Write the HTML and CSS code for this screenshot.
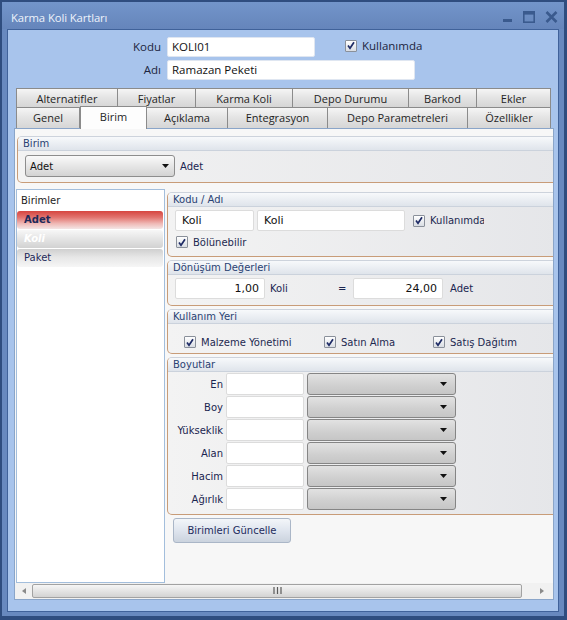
FILE: index.html
```html
<!DOCTYPE html>
<html lang="tr">
<head>
<meta charset="utf-8">
<title>Karma Koli Kartları</title>
<link rel="stylesheet" href="styles.css">
</head>
<body>
<div class="window">
  <div class="frame">
    <div class="titlebar">
      <span class="title">Karma Koli Kartları</span>
      <div class="controls">
        <svg class="ctl ctl-min" width="10" height="12" viewBox="0 0 10 12"><rect x="0" y="8" width="9" height="3" fill="currentColor"/></svg>
        <svg class="ctl ctl-max" width="12" height="12" viewBox="0 0 12 12"><rect x="0.8" y="0.8" width="10.4" height="10.4" fill="none" stroke="currentColor" stroke-width="1.6"/><rect x="0" y="0" width="12" height="3.6" fill="currentColor"/></svg>
        <svg class="ctl ctl-close" width="13" height="12" viewBox="0 0 13 12"><path d="M1.5 1 L11.5 11 M11.5 1 L1.5 11" stroke="currentColor" stroke-width="2.6" fill="none"/></svg>
      </div>
    </div>
    <div class="client">
      <div class="head">
        <span class="hl">Kodu</span>
        <div class="tb tb-kod">KOLI01</div>
        <div class="chk head-chk"><span class="cb"><svg width="11" height="11" viewBox="0 0 11 11"><path d="M2.2 5.6 L4.4 8.6 L8.8 2" fill="none" stroke="#1f2c66" stroke-width="1.9"/></svg></span><span>Kullanımda</span></div>
        <span class="hl">Adı</span>
        <div class="tb tb-adi">Ramazan Peketi</div>
      </div>

      <div class="tabs">
        <div class="tabrow r1">
          <div class="tab w101">Alternatifler</div>
          <div class="tab w79">Fiyatlar</div>
          <div class="tab w97">Karma Koli</div>
          <div class="tab w116">Depo Durumu</div>
          <div class="tab w68">Barkod</div>
          <div class="tab w74">Ekler</div>
        </div>
        <div class="tabrow r2">
          <div class="tab w64">Genel</div>
          <div class="tab w67 sel">Birim</div>
          <div class="tab w81">Açıklama</div>
          <div class="tab w100">Entegrasyon</div>
          <div class="tab w140">Depo Parametreleri</div>
          <div class="tab w83">Özellikler</div>
        </div>
      </div>

      <div class="panel">
        <div class="scroll">
          <div class="group g-birim">
            <div class="gh">Birim</div>
            <div class="gb row-birim">
              <div class="combo combo-birim"><span>Adet</span><svg class="arr" width="7" height="4" viewBox="0 0 7 4"><path d="M0 0 H7 L3.5 4 Z" fill="#111"/></svg></div>
              <span class="txt lbl-adet">Adet</span>
            </div>
          </div>

          <div class="lower">
            <div class="list">
              <div class="li-head">Birimler</div>
              <div class="li li-sel">Adet</div>
              <div class="li li-koli">Koli</div>
              <div class="li li-paket">Paket</div>
            </div>

            <div class="right">
              <div class="group g-kod">
                <div class="gh">Kodu / Adı</div>
                <div class="gb">
                  <div class="line">
                    <div class="in in-k1">Koli</div>
                    <div class="in in-k2">Koli</div>
                    <div class="chk chk-clip"><span class="cb"><svg width="11" height="11" viewBox="0 0 11 11"><path d="M2.2 5.6 L4.4 8.6 L8.8 2" fill="none" stroke="#1f2c66" stroke-width="1.9"/></svg></span><span>Kullanımda</span></div>
                  </div>
                  <div class="line line-chk">
                    <div class="chk"><span class="cb"><svg width="11" height="11" viewBox="0 0 11 11"><path d="M2.2 5.6 L4.4 8.6 L8.8 2" fill="none" stroke="#1f2c66" stroke-width="1.9"/></svg></span><span>Bölünebilir</span></div>
                  </div>
                </div>
              </div>

              <div class="group g-don">
                <div class="gh">Dönüşüm Değerleri</div>
                <div class="gb">
                  <div class="line">
                    <div class="in num">1,00</div>
                    <span class="txt u1">Koli</span>
                    <span class="txt eq">=</span>
                    <div class="in num">24,00</div>
                    <span class="txt u2">Adet</span>
                  </div>
                </div>
              </div>

              <div class="group g-kul">
                <div class="gh">Kullanım Yeri</div>
                <div class="gb">
                  <div class="line">
                    <div class="chk k1"><span class="cb"><svg width="11" height="11" viewBox="0 0 11 11"><path d="M2.2 5.6 L4.4 8.6 L8.8 2" fill="none" stroke="#1f2c66" stroke-width="1.9"/></svg></span><span>Malzeme Yönetimi</span></div>
                    <div class="chk k2"><span class="cb"><svg width="11" height="11" viewBox="0 0 11 11"><path d="M2.2 5.6 L4.4 8.6 L8.8 2" fill="none" stroke="#1f2c66" stroke-width="1.9"/></svg></span><span>Satın Alma</span></div>
                    <div class="chk k3"><span class="cb"><svg width="11" height="11" viewBox="0 0 11 11"><path d="M2.2 5.6 L4.4 8.6 L8.8 2" fill="none" stroke="#1f2c66" stroke-width="1.9"/></svg></span><span>Satış Dağıtım</span></div>
                  </div>
                </div>
              </div>

              <div class="group g-boy">
                <div class="gh">Boyutlar</div>
                <div class="gb">
                  <div class="drow"><span class="dl">En</span><div class="in din"></div><div class="combo dcombo"><svg class="arr" width="7" height="4" viewBox="0 0 7 4"><path d="M0 0 H7 L3.5 4 Z" fill="#111"/></svg></div></div>
                  <div class="drow"><span class="dl">Boy</span><div class="in din"></div><div class="combo dcombo"><svg class="arr" width="7" height="4" viewBox="0 0 7 4"><path d="M0 0 H7 L3.5 4 Z" fill="#111"/></svg></div></div>
                  <div class="drow"><span class="dl">Yükseklik</span><div class="in din"></div><div class="combo dcombo"><svg class="arr" width="7" height="4" viewBox="0 0 7 4"><path d="M0 0 H7 L3.5 4 Z" fill="#111"/></svg></div></div>
                  <div class="drow"><span class="dl">Alan</span><div class="in din"></div><div class="combo dcombo"><svg class="arr" width="7" height="4" viewBox="0 0 7 4"><path d="M0 0 H7 L3.5 4 Z" fill="#111"/></svg></div></div>
                  <div class="drow"><span class="dl">Hacim</span><div class="in din"></div><div class="combo dcombo"><svg class="arr" width="7" height="4" viewBox="0 0 7 4"><path d="M0 0 H7 L3.5 4 Z" fill="#111"/></svg></div></div>
                  <div class="drow"><span class="dl">Ağırlık</span><div class="in din"></div><div class="combo dcombo"><svg class="arr" width="7" height="4" viewBox="0 0 7 4"><path d="M0 0 H7 L3.5 4 Z" fill="#111"/></svg></div></div>
                </div>
              </div>

              <div class="btn">Birimleri Güncelle</div>
            </div>
          </div>
        </div>

        <div class="hscroll">
          <div class="sa sa-left"><svg width="4" height="6" viewBox="0 0 4 6"><path d="M4 0 V6 L0 3 Z" fill="#8a8a8a"/></svg></div>
          <div class="thumb"><svg width="9" height="7" viewBox="0 0 9 7"><path d="M1 0 V7 M4.5 0 V7 M8 0 V7" stroke="#5a5a5a" stroke-width="1.2"/></svg></div>
          <div class="sa sa-right"><svg width="4" height="6" viewBox="0 0 4 6"><path d="M0 0 V6 L4 3 Z" fill="#8a8a8a"/></svg></div>
        </div>
      </div>
    </div>
  </div>
</div>
</body>
</html>
```

FILE: styles.css
```css
* { box-sizing: border-box; }
html, body { margin: 0; padding: 0; }
body { background: #2e4c7e; width: 567px; height: 620px; overflow: hidden; }

.window {
  width: 567px; height: 620px;
  background: #2f4d7f;
  padding: 2px 3px 4px 2px;
}
.frame {
  height: 614px;
  background: #6889bf;
  padding: 0 5px 4px 5px;
  display: flex; flex-direction: column;
}
.titlebar {
  height: 27px; flex-shrink: 0;
  display: flex; align-items: center; justify-content: space-between;
  padding: 3px 1px 0 4px;
  background: linear-gradient(#7395ca, #6585bb);
  margin: 0 -5px; padding-left: 9px; padding-right: 6px;
}
.title {
  font-family: "Open Sans", "Liberation Sans", sans-serif;
  font-size: 11.3px; color: #eef3fb; letter-spacing: -0.1px;
}
.controls { display: flex; align-items: center; gap: 10px; color: #3a5a8e; }
.ctl { display: block; }

.client {
  flex: 1;
  border: 1px solid #40629a;
  background: #a8c4ec;
  display: flex; flex-direction: column;
}

/* header form */
.head {
  display: grid;
  grid-template-columns: 153px 148px 100px;
  grid-template-rows: 20px 20px;
  column-gap: 6px; row-gap: 3px;
  padding-top: 7px;
  font-family: "Open Sans", "Liberation Sans", sans-serif;
  font-size: 11.5px; color: #1c2440;
}
.hl { text-align: right; line-height: 19px; }
.tb {
  background: #fff; border-radius: 2px; border: 1px solid #dfe6f1;
  line-height: 18px; padding-left: 4px; color: #111;
}
.tb-adi { grid-column: 2 / span 2; width: 248px; }
.head-chk { margin-left: 24px; align-self: start; margin-top: 1px; }

.chk {
  display: flex; align-items: center; gap: 5px; white-space: nowrap;
}
.cb {
  width: 12px; height: 12px; flex-shrink: 0;
  border: 1px solid #8a909a; border-radius: 1px;
  background: linear-gradient(#ffffff, #d9dde3);
  display: flex; align-items: center; justify-content: center;
}
.cb svg { display: block; }

/* tabs */
.tabs { margin: 8px 6px 0 8px; font-family: "Open Sans", "Liberation Sans", sans-serif; font-size: 11px; color: #1f1f1f; }
.tabrow { display: flex; align-items: flex-start; }
.tab {
  height: 20px; line-height: 19px; text-align: center; flex-shrink: 0;
  background: linear-gradient(#f5f5f5, #e3e3e3 50%, #d6d6d6);
  border-right: 1px solid #8b8b8b; border-top: 1px solid #8b8b8b;
}
.tab:first-child { border-left: 1px solid #8b8b8b; }
.r1 .tab { border-bottom: 1px solid #8b8b8b; }
.r2 .tab { border-top: none; }
.tab.sel {
  background: #fdfdfd;
  height: 23px; margin-top: -2px; margin-bottom: -1px;
  border: 1px solid #8b8b8b; border-bottom: none;
  line-height: 20px;
  position: relative; z-index: 1;
}
.w101 { width: 102px; } .w79 { width: 78px; } .w97 { width: 97px; } .w116 { width: 116px; } .w68 { width: 68px; } .w74 { width: 74px; }
.w64 { width: 64px; } .w67 { width: 67px; } .w81 { width: 81px; } .w100 { width: 100px; } .w140 { width: 140px; } .w83 { width: 83px; }

/* panel */
.panel {
  height: 472px; flex-shrink: 0;
  margin: 0 4px 0 6px;
  border: 1px solid #8aa5c9;
  background: #f7f7f7;
  display: flex; flex-direction: column;
  font-family: "DejaVu Sans", "Liberation Sans", sans-serif;
  font-size: 10px; color: #1d2950;
}
.scroll { flex: 1; overflow: hidden; padding-top: 7px; display: flex; flex-direction: column; min-height: 0; }

.group {
  border: 1px solid #c89c78; border-top-color: #cdd3dc;
  border-radius: 5px;
  background: linear-gradient(to right, #f3f3f3, #e5e6e9);
  overflow: hidden; flex-shrink: 0;
}
.gh {
  height: 14px; line-height: 13px; padding-left: 5px;
  background: linear-gradient(#f7f9fb, #dfe4eb);
  border-bottom: 1px solid #cbd2dc;
  color: #2a4273;
}
.g-birim { margin-left: 2px; width: 560px; }
.row-birim { display: flex; align-items: center; padding: 4px 0 5px 6px; }

.combo {
  border: 1px solid #8d8d8d; border-radius: 3px;
  background: linear-gradient(#fafafa, #e6e6e6 50%, #d3d3d3);
  display: flex; align-items: center; justify-content: space-between;
  padding: 0 5px 0 4px;
}
.combo-birim { width: 150px; height: 22px; color: #111; }
.arr { display: block; flex-shrink: 0; margin-left: auto; }
.lbl-adet { margin-left: 5px; color: #111; }

.lower { flex: 1; display: flex; margin-top: 6px; min-height: 0; }
.list {
  width: 149px; margin-left: 1px; flex-shrink: 0;
  border: 1px solid #a3bedc; background: #fff;
}
.li-head { height: 20px; line-height: 21px; padding-left: 4px; color: #222; }
.li {
  height: 18px; line-height: 18px; margin: 1px 1px 0 0; padding-left: 7px;
  border-radius: 3px; color: #1e2a5a;
}
.li-sel {
  font-weight: bold;
  background: linear-gradient(#d6453f, #e2736e 35%, #efb9b6 70%, #f4e6e6);
}
.li-koli {
  color: #fff; font-weight: bold; font-style: italic;
  background: linear-gradient(#f7f7f7, #e4e4e4 50%, #d2d2d2);
}
.li-paket { background: linear-gradient(#cfcfcf, #e6e6e6 45%, #f6f6f6); }

.right { width: 395px; margin-left: 2px; padding-top: 3px; flex-shrink: 0; display: flex; flex-direction: column; gap: 3px; }
.gb { padding-left: 7px; }
.line { display: flex; align-items: center; }

.in {
  background: #fff; border: 1px solid #dcdcdc; border-radius: 2px;
  height: 21px; line-height: 19px; padding-left: 6px; color: #111;
  font-size: 11px;
}
.g-kod .gb { padding-top: 3px; padding-bottom: 7px; }
.in-k1 { width: 79px; }
.in-k2 { width: 148px; margin-left: 3px; }
.chk-clip { margin-left: 8px; width: 71px; overflow: hidden; }
.line-chk { margin-top: 4px; height: 14px; padding-left: 1px; }

.g-don .gb { padding-top: 3px; padding-bottom: 6px; }
.num { width: 90px; text-align: right; padding-right: 5px; }
.txt { color: #1a2550; }
.u1 { width: 73px; padding-left: 5px; }
.eq { width: 15px; }
.u2 { padding-left: 7px; }

.g-kul .gb { padding-top: 11px; padding-bottom: 4px; padding-left: 16px; }
.g-kul .line { height: 14px; }
.k1 { width: 140px; }
.k2 { width: 109px; }

.g-boy .gb { padding-top: 1px; padding-bottom: 4px; padding-left: 0; display: flex; flex-direction: column; gap: 1px; }
.drow { display: flex; align-items: center; height: 22px; }
.dl { width: 55px; text-align: right; color: #1a2550; }
.din { width: 78px; height: 22px; margin-left: 3px; }
.dcombo { width: 149px; height: 22px; margin-left: 3px; background: linear-gradient(#e2e2e2, #cfcfcf 60%, #c6c6c6); border-color: #858585; padding-right: 8px; }

.btn {
  width: 118px; height: 25px; margin-left: 6px;
  border: 1px solid #aab6c7; border-radius: 3px;
  background: linear-gradient(#f3f6f9, #dfe5ee 50%, #cbd3de);
  text-align: center; line-height: 23px; color: #1e2b5c;
}

.hscroll {
  height: 16px; flex-shrink: 0;
  display: flex; align-items: center;
  background: #f1f1f1;
  padding-bottom: 1px;
}
.sa { display: flex; align-items: center; justify-content: center; height: 14px; }
.sa-left { width: 17px; }
.sa-right { flex: 1; padding-left: 8px; }
.thumb {
  width: 490px; height: 14px;
  border: 1px solid #a2a2a2; border-radius: 2px;
  background: linear-gradient(#f6f6f6, #e4e4e4 50%, #d3d3d3);
  display: flex; align-items: center; justify-content: center;
}
.thumb svg { display: block; }
```
